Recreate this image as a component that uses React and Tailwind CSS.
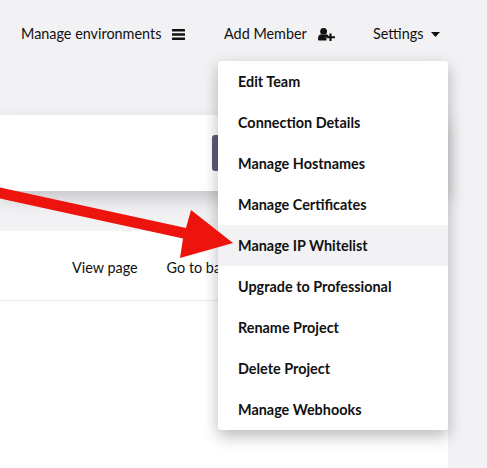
import React from 'react';

const menuItems = [
  'Edit Team',
  'Connection Details',
  'Manage Hostnames',
  'Manage Certificates',
  'Manage IP Whitelist',
  'Upgrade to Professional',
  'Rename Project',
  'Delete Project',
  'Manage Webhooks',
];

const BarsIcon = () => (
  <svg className="ml-[11px]" width="13" height="11" viewBox="0 0 13 11" fill="#111">
    <rect x="0" y="0" width="13" height="2.6" rx="0.4" />
    <rect x="0" y="4.2" width="13" height="2.6" rx="0.4" />
    <rect x="0" y="8.4" width="13" height="2.6" rx="0.4" />
  </svg>
);

const UserPlusIcon = () => (
  <svg className="ml-[11px]" width="17" height="13" viewBox="0 0 17 13" fill="#111">
    <circle cx="5.6" cy="3.4" r="3.4" />
    <path d="M0 11 C0 8 1.2 6.4 3 6.2 C4.4 7.4 6.8 7.4 8.2 6.2 C9.2 6.3 10 6.8 10.5 7.6 L10.5 9 L8.5 9 L8.5 12.6 L1.6 12.6 C0.6 12.6 0 12 0 11 Z" />
    <path d="M11.4 5.6 H13.6 V8.2 H17 V10.2 H13.6 V13 H11.4 V10.2 H9 V8.2 H11.4 Z" />
  </svg>
);

const CaretIcon = () => (
  <svg className="ml-[8px]" width="9" height="5" viewBox="0 0 9 5" fill="#111">
    <path d="M0 0 H9 L4.5 5 Z" />
  </svg>
);

const App = () => {
  return (
    <div className="relative h-[468px] w-[487px] overflow-hidden bg-[#f2f2f5] font-['Lato',sans-serif] text-[14.4px] text-[#111]">
      <div className="flex h-[115px] items-start pl-[21px] pt-[24px] leading-[20px]">
        <div className="flex w-[203px] items-center">
          <span>Manage environments</span>
          <BarsIcon />
        </div>
        <div className="flex w-[149px] items-center">
          <span>Add Member</span>
          <UserPlusIcon />
        </div>
        <div className="flex items-center">
          <span>Settings</span>
          <CaretIcon />
        </div>
      </div>

      <div className="h-[76px] w-[448px] bg-white pl-[212px] pt-[20px] shadow-[0_8px_16px_rgba(0,0,0,0.18)]">
        <div className="h-[36px] w-[40px] rounded-[3px] bg-[#625b78]" />
      </div>

      <div className="mt-[40px] h-[237px] w-[448px] bg-white">
        <div className="flex h-[70px] items-center border-b border-[#e8e8e8] pl-[72px] pt-[4px]">
          <span>View page</span>
          <span className="ml-[29px]">Go to back office</span>
        </div>
      </div>

      <div className="absolute left-[218px] top-[61px] w-[230px] rounded-[3px] bg-white shadow-[0_6px_16px_rgba(0,0,0,0.28)]">
        {menuItems.map((item) => (
          <div
            key={item}
            className={`flex h-[41px] items-center pl-[20px] font-bold ${item === 'Manage IP Whitelist' ? 'bg-[#f2f2f5]' : ''}`}
          >
            {item}
          </div>
        ))}
      </div>

      <svg className="absolute left-0 top-0" width="487" height="468" viewBox="0 0 487 468">
        <path d="M0 187.5 L186 228 L191 210 L233 243 L180 258 L183 238.5 L0 198.5 Z" fill="#ec140c" />
      </svg>
    </div>
  );
};

export default App;
